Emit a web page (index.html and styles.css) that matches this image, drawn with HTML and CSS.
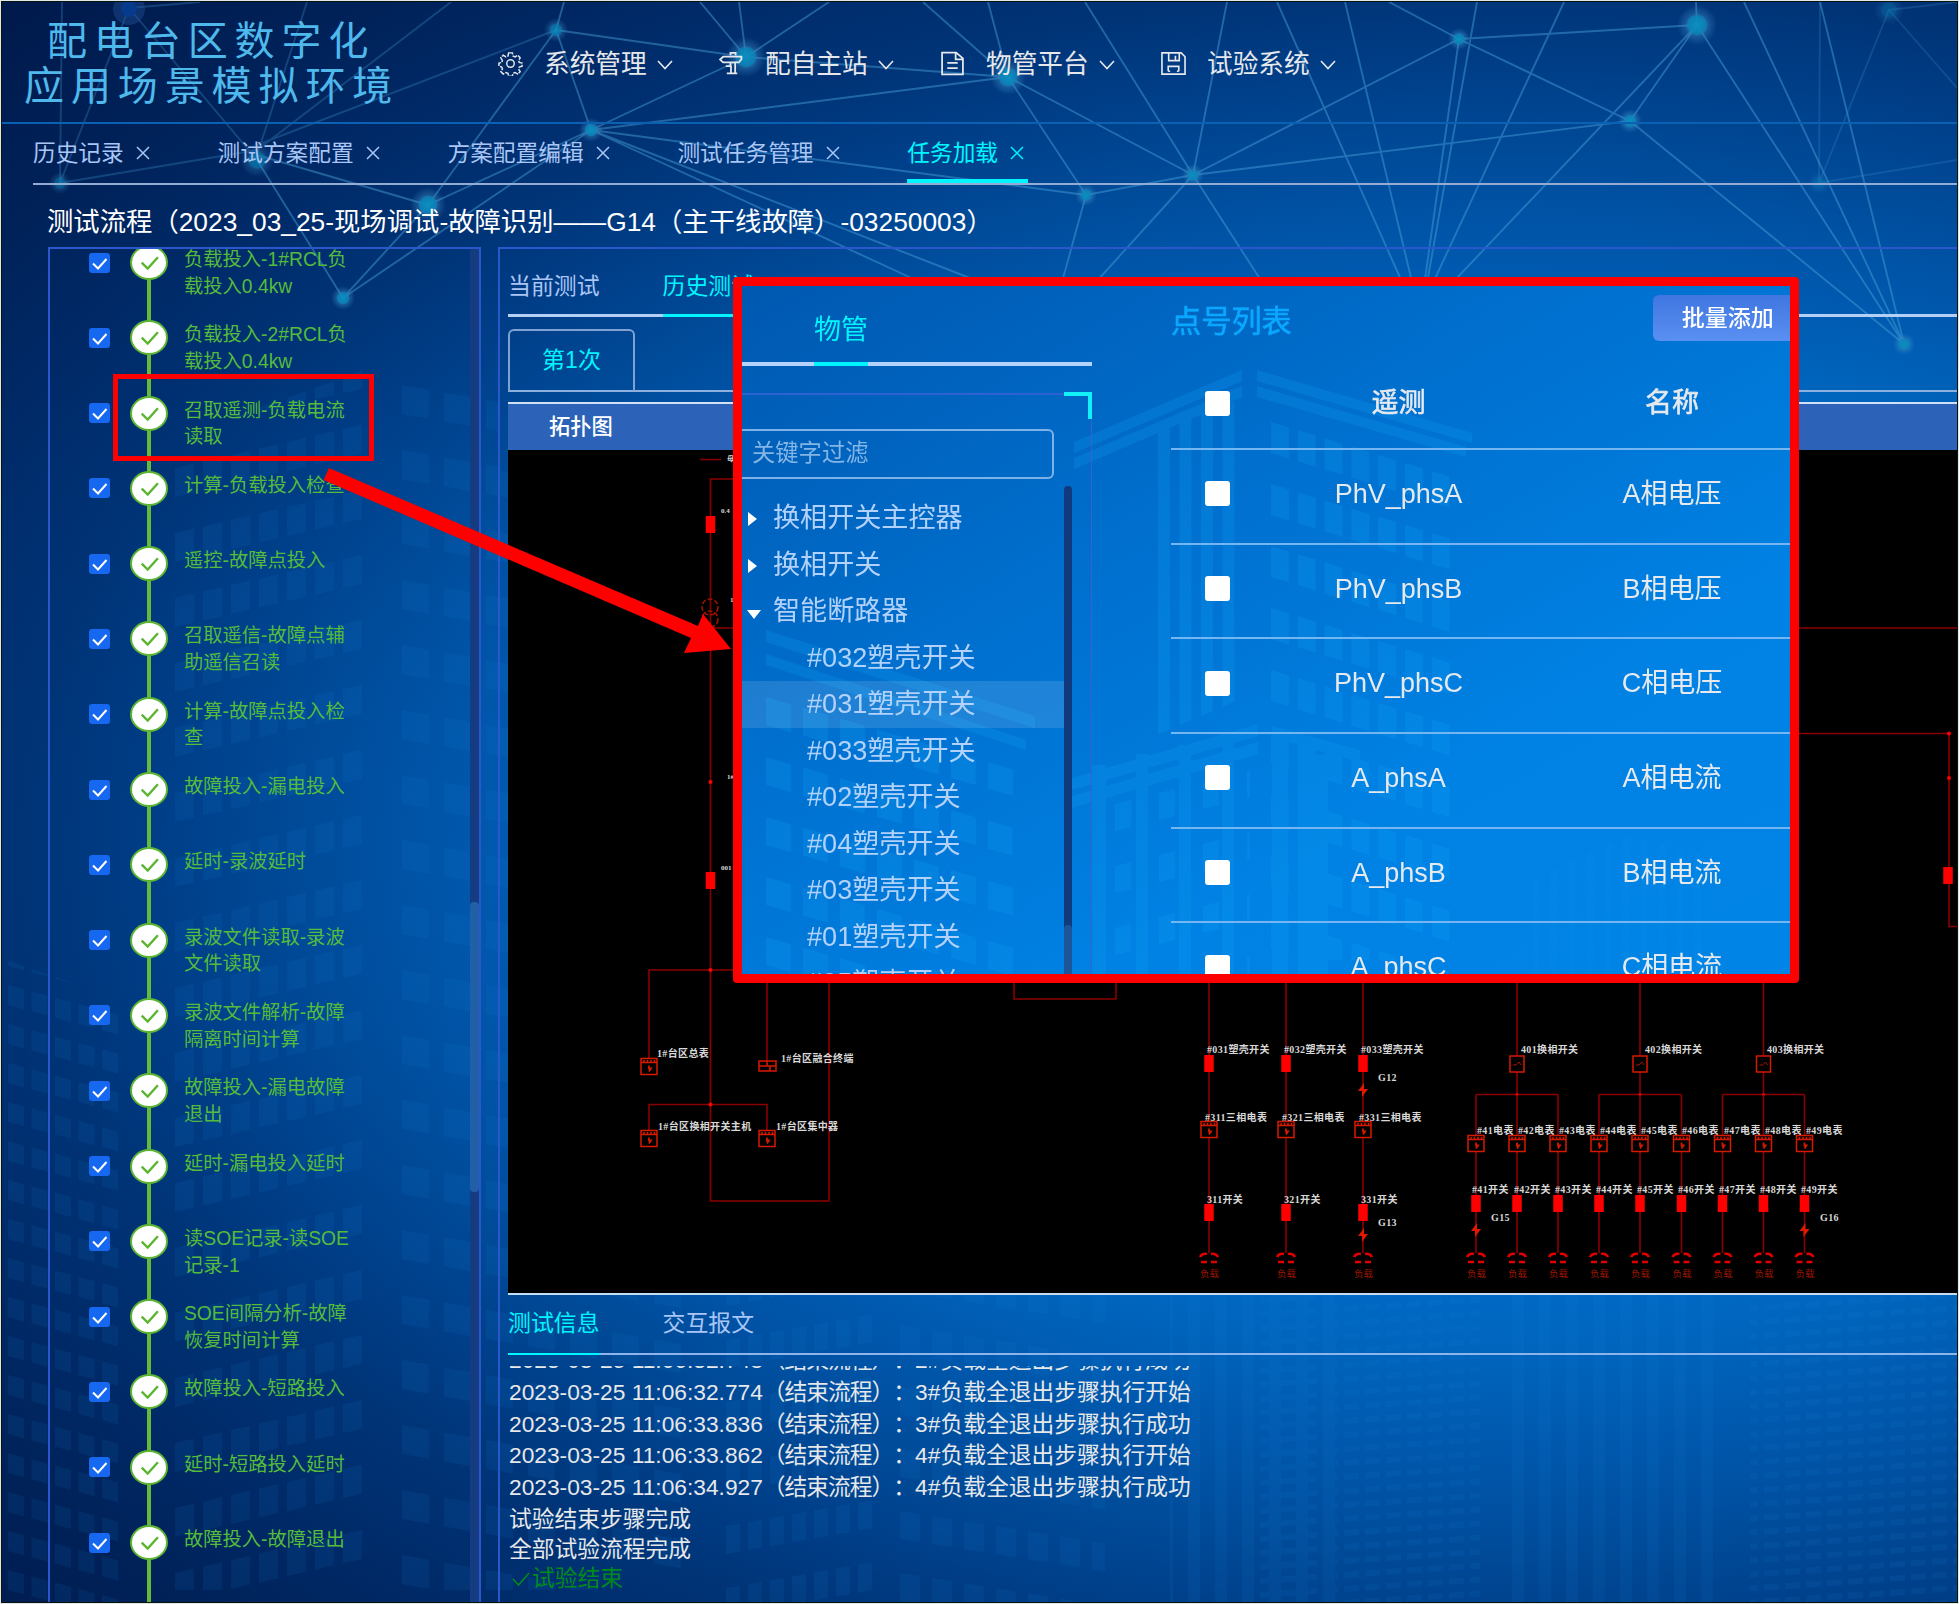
FILE: index.html
```html
<!DOCTYPE html>
<html lang="zh-CN">
<head>
<meta charset="utf-8">
<title>配电台区数字化应用场景模拟环境</title>
<link rel="stylesheet" href="styles.css">
</head>
<body>
<svg class="defs" width="0" height="0">
  <defs>
    <symbol id="i-check" viewBox="0 0 21 20"><path d="M4 10.500l5 5L17.500 6" fill="none" stroke="currentColor" stroke-width="2"/></symbol>
    <symbol id="i-down" viewBox="0 0 16 10"><path d="M1 1l7 7.500L15 1" fill="none" stroke="currentColor" stroke-width="1.600"/></symbol>
    <symbol id="i-close" viewBox="0 0 14 14"><path d="M1 1l12 12M13 1L1 13" fill="none" stroke="currentColor" stroke-width="1.500"/></symbol>
  </defs>
</svg>
<div class="app">
  <svg class="backdrop" viewBox="2 2 1955 1600" width="1955" height="1600">
    <defs>
      <pattern id="w1" width="23.500" height="39" patternUnits="userSpaceOnUse" patternTransform="translate(8 1102) skewY(15)"><rect width="16" height="20" fill="#1a86dc"/></pattern>
      <pattern id="w2" width="28" height="65" patternUnits="userSpaceOnUse" patternTransform="translate(175 1118) skewY(-13)"><rect width="19" height="29" fill="#1a86dc"/></pattern>
      <pattern id="w3" width="42" height="65" patternUnits="userSpaceOnUse" patternTransform="translate(402 1100) skewY(10)"><rect width="27" height="29" fill="#1a86dc"/></pattern>
      <pattern id="w4" width="22" height="62" patternUnits="userSpaceOnUse" patternTransform="translate(726 1340) skewY(-10)"><rect width="14" height="28" fill="#1a86dc"/></pattern>
      <pattern id="w5" width="32" height="62" patternUnits="userSpaceOnUse" patternTransform="translate(900 1325) skewY(9)"><rect width="20" height="28" fill="#1a86dc"/></pattern>
      <pattern id="w6" width="27" height="10" patternUnits="userSpaceOnUse"><rect width="12" height="10" fill="#1a86dc"/></pattern>
      <pattern id="w7" width="21" height="14" patternUnits="userSpaceOnUse" patternTransform="skewY(-4)"><rect width="15" height="6" fill="#1a86dc"/></pattern>
      <radialGradient id="glow"><stop offset="0" stop-color="#0d8fc0"/><stop offset=".45" stop-color="#0d86bb" stop-opacity=".9"/><stop offset=".55" stop-color="#3d8fc8" stop-opacity=".4"/><stop offset="1" stop-color="#3d8fc8" stop-opacity="0"/></radialGradient>
    </defs>
    <g opacity=".1">
      <path d="M6 960L122 1000V1602H6z" fill="url(#w1)"/>
      <path d="M172 440L364 370V1590H172z" fill="url(#w2)"/>
      <path d="M400 370L500 390V1590H400z" fill="url(#w3)"/>
      <path d="M500 470L690 540V1590H500z" fill="url(#w3)"/>
      <path d="M724 1295H872V1602H724z" fill="url(#w4)"/>
      <path d="M900 1295H1105V1602H900z" fill="url(#w5)"/>
      <path d="M1170 1295H1350V1602H1170z" fill="url(#w6)"/>
      <path d="M1250 1295H1480V1602H1250z" fill="url(#w7)"/>
      <path d="M1500 1295H1720V1602H1500z" fill="url(#w6)"/>
      <path d="M1750 1295H1957V1602H1750z" fill="url(#w7)"/>
    </g>
    <g class="net">
      <path opacity=".6" d="M129 8L60 183L62 2M129 8L257 160M129 8L200 2M60 183L257 150M257 155L307 2M257 150L451 2M257 145L556 30"/>
      <path d="M257 155L428 205M257 160L343 298L428 205L591 130M343 298L591 130M556 30L564 2M556 30L591 130M556 30L428 205M556 30L746 57M591 130L746 57M591 130L1008 77M591 130L1086 195M591 130L920 282M591 130L980 282M746 57L700 2M746 57L739 2M746 57L829 2M746 57L1008 77M1008 77L923 2M1008 77L988 2M1008 77L1086 195L1193 175zM1086 195L1062 282M1193 175L1227 2M1193 175L1085 2M1193 175L1096 282M1193 175L1262 282M1193 175L1459 39M1193 175L1630 121M1277 2L1402 282M1345 2L1412 282M1459 39L1389 2M1459 39L1697 25M1459 39L1630 121M1459 39L1422 300M1477 2L1424 300M1564 2L1425 300M1697 25L1436 300M1697 25L1630 121M1697 25L1696 2M1697 25L1904 344M1630 121L1904 344M1744 2L1904 344M1820 2L1904 344"/>
      <path opacity=".45" d="M1820 2L1819 183L1889 10L1957 2M1889 10L1957 88M1819 183L1957 160"/>
    </g>
    <g fill="url(#glow)">
      <circle cx="257" cy="160" r="17" opacity=".7"/><circle cx="60" cy="183" r="11" opacity=".6"/><circle cx="556" cy="30" r="12" opacity=".8"/><circle cx="591" cy="130" r="12"/><circle cx="428" cy="205" r="18"/><circle cx="343" cy="298" r="12"/>
      <circle cx="746" cy="57" r="20"/><circle cx="1008" cy="77" r="18"/><circle cx="1086" cy="195" r="11"/><circle cx="1193" cy="175" r="11"/><circle cx="1459" cy="39" r="11"/><circle cx="1697" cy="25" r="20"/><circle cx="1630" cy="121" r="12"/><circle cx="1904" cy="344" r="11"/><circle cx="1819" cy="183" r="11" opacity=".4"/><circle cx="1889" cy="10" r="15" opacity=".4"/>
    </g>
    <circle cx="129" cy="9" r="16" fill="#24549a" opacity=".4"/><circle cx="129" cy="9" r="8" fill="#063a8c"/>
  </svg>

  <header class="top">
    <h1 class="logo"><span>配电台区数字化</span><span>应用场景模拟环境</span></h1>
    <nav class="menu">
      <a class="menu-item"><svg class="ico" viewBox="0 0 24 24"><g fill="none" stroke="currentColor" stroke-width="1.400"><circle cx="12" cy="12" r="3.600"/><path d="M10.200 1.800h3.600l.6 3 2 .9 2.600-1.700 2.300 2.500-1.500 2.600.6 1.900 2.700.6v3l-2.700.8-.7 1.800 1.600 2.600-2.300 2.400-2.600-1.600-2 .8-.6 2.800h-3.600l-.6-2.800-2-.8L5 22.200l-2.300-2.400 1.600-2.600-.7-1.800-2.700-.8v-3l2.700-.6.6-1.900-1.500-2.600L5 4l2.600 1.700 2-.9z" stroke-dasharray="5 1.200"/></g></svg><span>系统管理</span><svg class="caret"><use href="#i-down"/></svg></a>
      <a class="menu-item"><svg class="ico" viewBox="0 0 24 24"><g fill="none" stroke="currentColor" stroke-width="1.700"><path d="M11 4V1.800h5V4M4 5.500h17.500V8L19 11H4L1 8.200zM11 11v3.500H6.500M15.500 11v10.500M11.500 14v7.500M7.500 21.500h10"/></g></svg><span>配自主站</span><svg class="caret"><use href="#i-down"/></svg></a>
      <a class="menu-item"><svg class="ico" viewBox="0 0 24 24"><path d="M2 1.500h13.500L22 7v15.500H2zM15 1.500V8h7M7 11.500h10M7 16.500h10" fill="none" stroke="currentColor" stroke-width="1.700"/></svg><span>物管平台</span><svg class="caret"><use href="#i-down"/></svg></a>
      <a class="menu-item"><svg class="ico big" viewBox="0 0 26 24"><path d="M1 1h20l4 4v18H1zM8 1v8h11V1M15 4v5M7.500 20v-5h11v5M7.500 20h2M16.500 20h2" fill="none" stroke="currentColor" stroke-width="1.700"/></svg><span>试验系统</span><svg class="caret"><use href="#i-down"/></svg></a>
    </nav>
  </header>

  <div class="tabs">
    <a class="tab">历史记录<svg><use href="#i-close"/></svg></a>
    <a class="tab">测试方案配置<svg><use href="#i-close"/></svg></a>
    <a class="tab">方案配置编辑<svg><use href="#i-close"/></svg></a>
    <a class="tab">测试任务管理<svg><use href="#i-close"/></svg></a>
    <a class="tab on">任务加载<svg><use href="#i-close"/></svg></a>
  </div>

  <h2 class="title">测试流程（2023_03_25-现场调试-故障识别——G14（主干线故障）-03250003）</h2>

  <main class="main">
    <section class="flow">
      <ul class="steps">
        <li><i class="cb"><svg><use href="#i-check"/></svg></i><i class="dot"><svg><use href="#i-check"/></svg></i><p>负载投入-1#RCL负<br>载投入0.4kw</p></li>
        <li><i class="cb"><svg><use href="#i-check"/></svg></i><i class="dot"><svg><use href="#i-check"/></svg></i><p>负载投入-2#RCL负<br>载投入0.4kw</p></li>
        <li><i class="cb"><svg><use href="#i-check"/></svg></i><i class="dot"><svg><use href="#i-check"/></svg></i><p>召取遥测-负载电流<br>读取</p></li>
        <li><i class="cb"><svg><use href="#i-check"/></svg></i><i class="dot"><svg><use href="#i-check"/></svg></i><p>计算-负载投入检查</p></li>
        <li><i class="cb"><svg><use href="#i-check"/></svg></i><i class="dot"><svg><use href="#i-check"/></svg></i><p>遥控-故障点投入</p></li>
        <li><i class="cb"><svg><use href="#i-check"/></svg></i><i class="dot"><svg><use href="#i-check"/></svg></i><p>召取遥信-故障点辅<br>助遥信召读</p></li>
        <li><i class="cb"><svg><use href="#i-check"/></svg></i><i class="dot"><svg><use href="#i-check"/></svg></i><p>计算-故障点投入检<br>查</p></li>
        <li><i class="cb"><svg><use href="#i-check"/></svg></i><i class="dot"><svg><use href="#i-check"/></svg></i><p>故障投入-漏电投入</p></li>
        <li><i class="cb"><svg><use href="#i-check"/></svg></i><i class="dot"><svg><use href="#i-check"/></svg></i><p>延时-录波延时</p></li>
        <li><i class="cb"><svg><use href="#i-check"/></svg></i><i class="dot"><svg><use href="#i-check"/></svg></i><p>录波文件读取-录波<br>文件读取</p></li>
        <li><i class="cb"><svg><use href="#i-check"/></svg></i><i class="dot"><svg><use href="#i-check"/></svg></i><p>录波文件解析-故障<br>隔离时间计算</p></li>
        <li><i class="cb"><svg><use href="#i-check"/></svg></i><i class="dot"><svg><use href="#i-check"/></svg></i><p>故障投入-漏电故障<br>退出</p></li>
        <li><i class="cb"><svg><use href="#i-check"/></svg></i><i class="dot"><svg><use href="#i-check"/></svg></i><p>延时-漏电投入延时</p></li>
        <li><i class="cb"><svg><use href="#i-check"/></svg></i><i class="dot"><svg><use href="#i-check"/></svg></i><p>读SOE记录-读SOE<br>记录-1</p></li>
        <li><i class="cb"><svg><use href="#i-check"/></svg></i><i class="dot"><svg><use href="#i-check"/></svg></i><p>SOE间隔分析-故障<br>恢复时间计算</p></li>
        <li><i class="cb"><svg><use href="#i-check"/></svg></i><i class="dot"><svg><use href="#i-check"/></svg></i><p>故障投入-短路投入</p></li>
        <li><i class="cb"><svg><use href="#i-check"/></svg></i><i class="dot"><svg><use href="#i-check"/></svg></i><p>延时-短路投入延时</p></li>
        <li><i class="cb"><svg><use href="#i-check"/></svg></i><i class="dot"><svg><use href="#i-check"/></svg></i><p>故障投入-故障退出</p></li>
      </ul>
      <div class="flow-scroll"><b></b></div>
    </section>

    <section class="detail">
      <div class="subtabs"><a>当前测试</a><a class="on">历史测试</a></div>
      <div class="runs"><a>第1次</a></div>
      <div class="bar">拓扑图</div>
      <div class="canvas">
        <svg viewBox="508 450 1449 843" width="1449" height="843">
          <defs>
            <g id="meter"><rect x="-8" y="0.500" width="16" height="16" fill="#000" stroke="#d61a00" stroke-width="1.500"/><path d="M-8 4.500H8M-5 2v2M-1.500 2v2M2 2v2M5.500 2v2" stroke="#d61a00" stroke-width="1.500"/><path d="M0 7.500v3h2L0 13.500" stroke="#d61a00" stroke-width="1.800" fill="none"/></g>
            <rect id="sw" x="-4.750" y="0" width="9.500" height="17" fill="#f00"/>
            <path id="bolt" d="M1-7L-5 1h4L-1 7L5-1H1z" fill="#e01800"/>
            <g id="load"><path d="M-9 4Q-7 0-2 1M9 4Q7 0 2 1M-8 9h6M2 9h6" fill="none" stroke="#e00000" stroke-width="2.500"/><text x="-9" y="24" class="dim">负载</text></g>
            <g id="feeder"><path class="wire" d="M0 983V1253"/><use href="#sw" y="1055"/><use href="#meter" y="1121"/><use href="#sw" y="1204"/><use href="#load" y="1253"/></g>
            <g id="leaf"><path class="wire" d="M0 1094.500V1253"/><use href="#meter" y="1135"/><use href="#sw" y="1195"/><use href="#load" y="1253"/></g>
            <g id="trunk"><path class="wire" d="M0 983V1094M-41 1094.500H41"/><rect x="-7" y="1056" width="14" height="16" fill="#000" stroke="#d61a00" stroke-width="1.500"/><path d="M-4 1065h3l3-3 2 3" fill="none" stroke="#a81400"/><circle cy="1094.500" r="1.500" fill="#f00"/></g>
          </defs>
          <path class="wire" d="M700 459.500h21M740 479H710.500V1201H829V970M702 628H1957M649 1060V970H767V1062M649 1132V1104.500H767V1132M1014 970V999H1116V970M1790 733.500H1949V926.500H1957"/>
          <g fill="none" stroke="#a01400" stroke-width="1.500" stroke-dasharray="5 2"><circle cx="710" cy="607" r="8"/><circle cx="710" cy="619" r="8"/></g>
          <g fill="#f00"><circle cx="710.500" cy="970" r="2"/><circle cx="710.500" cy="1104.500" r="2"/><circle cx="710.500" cy="782" r="2"/><circle cx="1949" cy="733.500" r="2"/><circle cx="1949" cy="778" r="2"/></g>
          <use href="#sw" x="710.500" y="516"/><use href="#sw" x="710.500" y="872"/><use href="#sw" x="1948" y="867"/>
          <use href="#meter" x="649" y="1058"/><use href="#meter" x="649" y="1130"/><use href="#meter" x="767" y="1130"/>
          <path d="M759 1061h17v10h-17zM759 1066h17M767 1061v5M770 1066v5" fill="#000" stroke="#d61a00" stroke-width="1.500"/>
          <use href="#feeder" x="1209"/><use href="#feeder" x="1286"/><use href="#feeder" x="1363"/>
          <use href="#trunk" x="1517"/><use href="#trunk" x="1640"/><use href="#trunk" x="1763.500"/>
          <use href="#leaf" x="1476"/><use href="#leaf" x="1517"/><use href="#leaf" x="1558"/><use href="#leaf" x="1599"/><use href="#leaf" x="1640"/><use href="#leaf" x="1681.500"/><use href="#leaf" x="1722.500"/><use href="#leaf" x="1763.500"/><use href="#leaf" x="1804.500"/>
          <use href="#bolt" x="1363" y="1090"/><use href="#bolt" x="1363" y="1235"/><use href="#bolt" x="1476" y="1230"/><use href="#bolt" x="1804.500" y="1230"/>
          <g class="lbl">
            <text class="tiny" x="727" y="461">母</text><text class="tiny" x="721" y="513">0.4</text><text class="tiny" x="730" y="602">1</text><text class="tiny" x="727" y="779">1#</text><text class="tiny" x="721" y="870">001</text>
            <text x="657" y="1057">1#台区总表</text><text x="781" y="1062">1#台区融合终端</text><text x="658" y="1130">1#台区换相开关主机</text><text x="776" y="1130">1#台区集中器</text>
            <text x="1207" y="1053">#031塑壳开关</text><text x="1284" y="1053">#032塑壳开关</text><text x="1361" y="1053">#033塑壳开关</text>
            <text x="1205" y="1121">#311三相电表</text><text x="1282" y="1121">#321三相电表</text><text x="1359" y="1121">#331三相电表</text>
            <text x="1207" y="1203">311开关</text><text x="1284" y="1203">321开关</text><text x="1361" y="1203">331开关</text>
            <text x="1378" y="1081">G12</text><text x="1378" y="1226">G13</text><text x="1491" y="1221">G15</text><text x="1820" y="1221">G16</text>
            <text x="1521" y="1053">401换相开关</text><text x="1645" y="1053">402换相开关</text><text x="1767" y="1053">403换相开关</text>
            <text x="1477" y="1134">#41电表</text><text x="1518" y="1134">#42电表</text><text x="1559" y="1134">#43电表</text><text x="1600" y="1134">#44电表</text><text x="1641" y="1134">#45电表</text><text x="1682" y="1134">#46电表</text><text x="1724" y="1134">#47电表</text><text x="1765" y="1134">#48电表</text><text x="1806" y="1134">#49电表</text>
            <text x="1472" y="1193">#41开关</text><text x="1514" y="1193">#42开关</text><text x="1555" y="1193">#43开关</text><text x="1596" y="1193">#44开关</text><text x="1637" y="1193">#45开关</text><text x="1678" y="1193">#46开关</text><text x="1719" y="1193">#47开关</text><text x="1760" y="1193">#48开关</text><text x="1801" y="1193">#49开关</text>
          </g>
        </svg>
      </div>
      <div class="infotabs"><a class="on">测试信息</a><a>交互报文</a></div>
      <div class="log">
        <p class="first">2023-03-25 11:06:32.748<span>（结束流程）：</span>2#负载全退出步骤执行成功</p>
        <p>2023-03-25 11:06:32.774<span>（结束流程）：</span>3#负载全退出步骤执行开始</p>
        <p>2023-03-25 11:06:33.836<span>（结束流程）：</span>3#负载全退出步骤执行成功</p>
        <p>2023-03-25 11:06:33.862<span>（结束流程）：</span>4#负载全退出步骤执行开始</p>
        <p>2023-03-25 11:06:34.927<span>（结束流程）：</span>4#负载全退出步骤执行成功</p>
        <p>试验结束步骤完成</p>
        <p class="tight">全部试验流程完成</p>
        <p class="tight done"><svg viewBox="0 0 20 16"><path d="M2 8l5.500 6L18 2" fill="none" stroke="currentColor" stroke-width="1.600"/></svg>试验结束</p>
      </div>
    </section>
  </main>

  <div class="mark"></div>
  <svg class="arrow" viewBox="320 460 415 200" width="415" height="200"><path d="M329 468L698 626L703 614L731 649L684 653L691 638L323.500 480z" fill="#f00"/></svg>

  <section class="popup">
    <svg class="popup-bg" viewBox="742 286 1048 688" width="1048" height="688">
      <defs>
        <pattern id="p1" width="37" height="60" patternUnits="userSpaceOnUse" patternTransform="translate(766 757) skewY(16)"><rect width="25" height="28" fill="#10a0f0"/></pattern>
        <pattern id="p2" width="26.800" height="62" patternUnits="userSpaceOnUse" patternTransform="translate(1271 422) skewY(17)"><rect width="18" height="31" fill="#10a0f0"/></pattern>
        <pattern id="p3" width="21.500" height="10" patternUnits="userSpaceOnUse" patternTransform="translate(1158 0)"><rect width="12" height="10" fill="#10a0f0"/></pattern>
        <pattern id="p4" width="44" height="62" patternUnits="userSpaceOnUse" patternTransform="translate(1115 804) skewY(-14)"><rect width="16" height="27" fill="#10a0f0"/></pattern>
        <pattern id="p5" width="18" height="10" patternUnits="userSpaceOnUse" patternTransform="translate(1533 0)"><rect width="6" height="10" fill="#10a0f0"/></pattern>
      </defs>
      <g opacity=".24">
        <path d="M764 696L1015 770V974H764z" fill="url(#p1)"/>
        <path d="M766 630L1035 716V728L766 642zM766 654L1026 740V750L766 665z" fill="#10a0f0"/>
        <path d="M1074 442L1242 370V381L1074 453zM1074 458L1242 386V397L1074 469zM1257 370L1472 433V443L1257 381zM1257 386L1466 447V457L1257 397z" fill="#10a0f0"/>
        <path d="M1157 430L1238 400V700L1157 735z" fill="url(#p3)"/>
        <path d="M1270 420L1452 470V960H1270z" fill="url(#p2)"/>
        <path d="M1072 778L1258 724V736L1072 790zM1072 796L1258 742V754L1072 808zM1272 726L1360 750V762L1272 738z" fill="#10a0f0"/>
        <path d="M1092 765h14V974h-14zM1136 754h12V974h-12zM1179 745h12V974h-12zM1222 738h12V974h-12zM1272 735h16V974h-16zM1298 755h30V974h-30z" fill="#10a0f0"/>
        <path d="M1112 790L1250 755V974H1112z" fill="url(#p4)"/>
        <path opacity=".5" d="M1533 880L1630 835L1705 855V974H1533z" fill="url(#p5)"/>
      </g>
    </svg>
    <div class="pick">
      <div class="pick-tab"><a>物管</a></div>
      <div class="pick-box">
        <i class="corner"></i>
        <div class="filter">关键字过滤</div>
        <div class="pick-body">
          <ul class="tree">
            <li class="shut">换相开关主控器</li>
            <li class="shut">换相开关</li>
            <li class="open">智能断路器</li>
            <li class="kid">#032塑壳开关</li>
            <li class="kid hot">#031塑壳开关</li>
            <li class="kid">#033塑壳开关</li>
            <li class="kid">#02塑壳开关</li>
            <li class="kid">#04塑壳开关</li>
            <li class="kid">#03塑壳开关</li>
            <li class="kid">#01塑壳开关</li>
            <li class="kid last">#05塑壳开关</li>
          </ul>
          <div class="pick-scroll"><b></b></div>
        </div>
      </div>
    </div>
    <div class="points">
      <div class="points-head"><h3>点号列表</h3><button>批量添加</button></div>
      <div class="row th"><i></i><span>遥测</span><span>名称</span></div>
      <div class="row"><i></i><span>PhV_phsA</span><span>A相电压</span></div>
      <div class="row"><i></i><span>PhV_phsB</span><span>B相电压</span></div>
      <div class="row"><i></i><span>PhV_phsC</span><span>C相电压</span></div>
      <div class="row"><i></i><span>A_phsA</span><span>A相电流</span></div>
      <div class="row"><i></i><span>A_phsB</span><span>B相电流</span></div>
      <div class="row"><i></i><span>A_phsC</span><span>C相电流</span></div>
    </div>
  </section>
</div>
</body>
</html>
```
FILE: styles.css
```css
* { box-sizing: border-box; }
body { margin: 0; padding: 1px; background: #dfe8e8; font-family: "Liberation Sans", "Noto Sans CJK SC", sans-serif; text-spacing-trim: space-all; overflow: hidden; }
h1, h2, h3, p, ul { margin: 0; padding: 0; font-weight: 400; }
ul { list-style: none; }
i { font-style: normal; display: block; }
.defs { position: absolute; }

.app {
  position: relative; width: 1957px; height: 1602px; border: 1px solid #0c120c; overflow: hidden;
  display: flex; flex-direction: column;
  background: radial-gradient(1800px 1050px at 1500px 850px, #0084e6 0%, #0070d0 34%, #0064bc 48%, #0059ae 56%, #0051a3 62%, #004a98 67%, #003f89 74%, #003477 82%, #002c6b 90%, #00235b 100%, #00194b 116%);
}
.app > * { flex: none; }
.backdrop { position: absolute; left: 0; top: 0; }
.net path { fill: none; stroke: #4aa3dc; stroke-width: 1.900; stroke-opacity: .45; }

.top { position: relative; height: 122px; border-bottom: 2px solid #0a60b2; display: flex; }
.logo { width: 400px; padding: 17px 0 0 22px; color: #4fb9ec; font-size: 40px; line-height: 45px; letter-spacing: 6.900px; white-space: nowrap; }
.logo span { display: block; }
.logo span:first-child { padding-left: 23px; }
.menu { display: flex; padding-left: 96px; }
.menu-item { display: flex; align-items: center; width: 221px; height: 122px; color: #e6e8ec; font-size: 25.700px; white-space: nowrap; }
.menu-item span { margin: -3px 0 0 -1px; }
.ico { width: 25px; height: 25px; margin-right: 22px; flex: none; }
.caret { width: 16px; height: 10px; margin-left: 10px; margin-top: 4px; }

.tabs { position: relative; display: flex; gap: 63.800px; margin-left: 31px; height: 61px; border-bottom: 2px solid #93acd4; }
.tab { display: flex; align-items: center; height: 59px; padding: 0 4px 5px 0; font-size: 22.700px; color: #a9c6f6; white-space: nowrap; }
.tab svg { width: 14px; height: 14px; margin: 4px 0 0 12px; }
.tab.on { color: #00f6ff; border-bottom: 4px solid #00f6ff; padding-bottom: 1px; }

.title { position: relative; height: 62px; padding: 12px 0 0 45px; line-height: 50px; font-size: 26.350px; color: #fff; white-space: nowrap; }

.main { position: relative; display: flex; gap: 17px; margin-left: 46px; height: 1355px; }
.flow { width: 433px; border: 2px solid #2b57cc; border-bottom: 0; display: flex; justify-content: space-between; overflow: hidden; }
.steps { margin-top: -24.500px; }
.steps li { position: relative; display: flex; height: 75.300px; padding-left: 39px; color: #55bb3c; font-size: 19.300px; line-height: 26.700px; }
.steps li::before { content: ""; position: absolute; left: 97px; top: 38px; width: 4px; height: 76px; background: #67b93a; }
.cb { width: 21px; height: 20px; margin-top: 28px; border-radius: 3px; background: #1668f0; color: #fff; }
.cb svg { display: block; width: 21px; height: 20px; }
.dot { position: relative; width: 38px; height: 35px; margin: 20.500px 0 0 20px; border: 2px solid #5cb531; border-radius: 50%; background: #fff; color: #5cb531; }
.dot svg { display: block; width: 27px; height: 24px; margin: 3px 0 0 4px; }
.steps p { margin: 22.500px 0 0 16px; white-space: nowrap; }
.flow-scroll { width: 9px; background: #153c80; }
.flow-scroll b { display: block; margin-top: 653px; height: 290px; border-radius: 4px; background: #215fa6; }

.detail { flex: 1; border: 2px solid #2b57cc; border-width: 2px 0 0 2px; padding-left: 8px; display: flex; flex-direction: column; }
.detail > div { flex: none; }
.subtabs { display: flex; height: 68px; border-bottom: 3px solid #b4cff5; }
.subtabs a { height: 68px; margin-right: 63px; padding-top: 9px; line-height: 56px; font-size: 22.900px; color: #a9c6f6; border-bottom: 3px solid transparent; }
.subtabs .on, .infotabs .on { color: #00f6ff; border-color: #00f6ff; }
.runs { margin-top: 12px; height: 63px; border-bottom: 2px solid #8db0de; }
.runs a { display: block; width: 127px; height: 62px; border: 2px solid #7fa2d2; border-bottom: 0; border-radius: 6px 6px 0 0; color: #00f6ff; font-size: 23px; line-height: 58px; text-align: center; }
.bar { margin-top: 10px; height: 48px; border-top: 2px solid #d0e0f6; background: #2c63b8; padding-left: 41px; font-size: 21.300px; font-weight: 500; line-height: 47px; color: #fff; }
.canvas { height: 845px; background: #000; border-bottom: 2px solid #c4dcf4; overflow: hidden; }
.canvas svg { display: block; }
.wire { fill: none; stroke: #8a0000; stroke-width: 1.600; }
.lbl { fill: #d8d8d8; font: 700 10px "Liberation Serif", "Noto Sans CJK SC", serif; letter-spacing: .35px; }
.tiny { font-size: 7px; letter-spacing: 0; }
.dim { fill: #9c1600; font: 9.500px "Noto Sans CJK SC", sans-serif; }
.infotabs { display: flex; height: 60px; border-bottom: 2px solid #8db5ec; }
.infotabs a { height: 60px; margin-right: 63px; line-height: 57px; font-size: 22.900px; color: #a9c6f6; border-bottom: 2px solid transparent; }
.log { margin-top: 11px; height: 234px; padding-left: 1px; overflow: hidden; font-size: 22.750px; color: #e6e8ea; white-space: nowrap; }
.log p { height: 31.800px; line-height: 32.400px; }
.log span { letter-spacing: -1px; }
.log .first { margin-top: -22px; }
.log .tight { height: 29px; line-height: 29px; }
.log .done { color: #008a1c; }
.done svg { width: 20px; height: 16px; margin: 0 1px 0 2px; vertical-align: -1px; }

.mark { position: absolute; left: 111px; top: 372px; width: 261px; height: 87px; border: 5px solid #f00; }
.arrow { position: absolute; left: 318px; top: 458px; }

.popup { position: absolute; left: 731px; top: 275px; width: 1066px; height: 706px; border: 9px solid #f00; border-radius: 4px; overflow: hidden; display: flex; background: linear-gradient(150deg, #0058b0 0%, #0070cf 38%, #0082e4 70%, #0084e6 100%); }
.popup-bg { position: absolute; left: 0; top: 0; }
.pick { position: relative; width: 350px; flex: none; }
.pick-tab { height: 80px; border-bottom: 4px solid #b4d2fa; padding-left: 72px; display: flex; }
.pick-tab a { height: 80px; padding-top: 14px; line-height: 60px; font-size: 27px; color: #00f6ff; border-bottom: 4px solid #00f6ff; }
.pick-box { position: relative; margin-top: 27px; height: 600px; border-top: 2px solid #2d62d4; border-right: 1px solid #3a62cf; padding-top: 34px; }
.corner { position: absolute; right: -1px; top: -3px; width: 28px; height: 27px; border: 4px solid #14f0f8; border-width: 4px 4px 0 0; }
.filter { width: 312px; height: 50px; border: 2px solid #7db2e8; border-left: 0; border-radius: 0 6px 6px 0; padding-left: 10px; line-height: 44px; font-size: 23.300px; color: #82b6e6; }
.pick-body { display: flex; margin-top: 7px; }
.tree { width: 322px; padding-top: 9px; }
.tree li { position: relative; height: 46.500px; line-height: 46.500px; padding-left: 31px; font-size: 27.100px; color: #b2d2fb; white-space: nowrap; }
.tree .kid { padding-left: 65px; }
.tree .last { line-height: 45px; }
.tree .hot { background: rgba(255, 255, 255, .12); }
.shut::before { content: ""; position: absolute; left: 6px; top: 17px; border: solid transparent; border-width: 7px 0 7px 9px; border-left-color: #fff; }
.open::before { content: ""; position: absolute; left: 5px; top: 22px; border: solid transparent; border-width: 9px 7px 0; border-top-color: #fff; }
.pick-scroll { width: 8px; height: 600px; border-radius: 4px; background: #103a7c; }
.pick-scroll b { display: block; margin-top: 439px; height: 160px; border-radius: 4px; background: #1c5698; }

.points { position: relative; width: 641px; flex: none; margin-left: 79px; }
.points-head { display: flex; height: 73px; padding-top: 9px; }
.points-head h3 { width: 484px; font-size: 30.200px; line-height: 54px; color: #0aa8ff; -webkit-text-stroke: .6px #0aa8ff; }
.points button { width: 160px; height: 46px; border: 0; border-radius: 6px; padding: 0 0 4px 29px; text-align: left; font: 500 23px "Liberation Sans", "Noto Sans CJK SC", sans-serif; color: #fff; background: linear-gradient(#3f76e0, #5a90f2); }
.row { display: grid; grid-template-columns: 93px 269px 278px; align-items: center; height: 94.700px; padding-bottom: 5px; border-bottom: 2px solid #74b6f2; font-size: 27px; line-height: 32px; color: #e6e9ee; text-align: center; }
.row i { width: 25px; height: 25px; border-radius: 3px; background: #fff; justify-self: center; }
.row.th { height: 91px; padding-bottom: 1px; -webkit-text-stroke: .6px #e6e9ee; }
.th span { margin-top: -1px; }
```
